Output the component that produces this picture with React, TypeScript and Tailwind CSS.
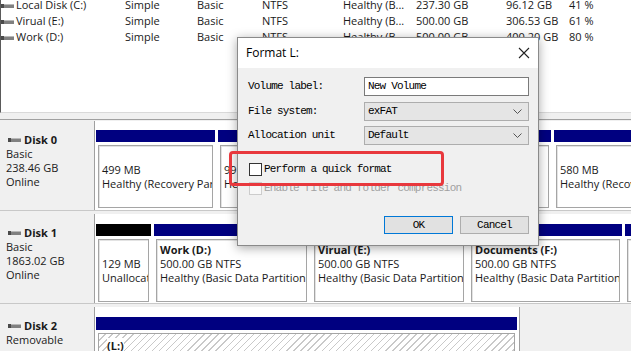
import React from "react";

type Vol = {
  name: string;
  cap: string;
  free: string;
  pct: string;
};

const vols: Vol[] = [
  { name: "Local Disk (C:)", cap: "237.30 GB", free: "96.12 GB", pct: "41 %" },
  { name: "Virual (E:)", cap: "500.00 GB", free: "306.53 GB", pct: "61 %" },
  { name: "Work (D:)", cap: "500.00 GB", free: "400.20 GB", pct: "80 %" },
];

const DriveIcon = () => (
  <svg width="13" height="6" viewBox="0 0 13 6">
    <rect x="0" y="1" width="13" height="4" fill="#808080" />
    <rect x="0" y="1" width="13" height="1" fill="#b8b8b8" />
    <rect x="0" y="1" width="3" height="4" fill="#4a4a4a" />
  </svg>
);

type Part = {
  w: string;
  bar: string;
  lines: string[];
  title?: string;
  top?: boolean;
};

const PartBox = ({ p }: { p: Part }) => (
  <div className={`${p.w} shrink-0 flex flex-col`}>
    <div className={`h-[12px] ${p.bar}`} />
    <div
      className={`mx-[2px] mt-[3px] h-[63px] bg-white border border-[#a5a5a5] shadow-[inset_1px_1px_0_#e3e3e3] pl-[3px] flex flex-col overflow-hidden whitespace-nowrap leading-[14px] ${
        p.top ? "pt-[3px]" : "justify-center"
      }`}
    >
      {p.title && <div className="font-bold">{p.title}</div>}
      {p.lines.map((l, i) => (
        <div key={i}>{l}</div>
      ))}
    </div>
  </div>
);

const DiskLabel = ({ n, lines }: { n: string; lines: string[] }) => (
  <div className="w-[95px] shrink-0 bg-[#f0f0f0] border-r border-[#a0a0a0] pt-[12px] pl-[6px] leading-[14px]">
    <div className="flex items-center gap-[3px] pl-[2px] font-bold">
      <DriveIcon />
      <span>{n}</span>
    </div>
    {lines.map((l) => (
      <div key={l}>{l}</div>
    ))}
  </div>
);

const Chevron = () => (
  <svg width="9" height="5" viewBox="0 0 9 5" className="mr-[6px]">
    <path d="M0.5 0.5 L4.5 4.5 L8.5 0.5" stroke="#555" fill="none" strokeWidth="1" />
  </svg>
);

export default function App() {
  const disk0: Part[] = [
    { w: "w-[119px]", bar: "bg-[#000080]", lines: ["499 MB", "Healthy (Recovery Partition)"] },
    { w: "w-[71px]", bar: "bg-[#000080]", lines: ["99 MB", "Healthy (EFI System)"] },
    {
      w: "w-[259px]",
      bar: "bg-[#000080]",
      lines: ["237.30 GB NTFS", "Healthy (Boot, Page File, Crash D"],
    },
    { w: "w-[100px]", bar: "bg-[#000080]", lines: ["580 MB", "Healthy (Recovery Partition)"] },
  ];
  const disk1: Part[] = [
    { w: "w-[55px]", bar: "bg-black", lines: ["129 MB", "Unallocated"] },
    {
      w: "w-[155px]",
      bar: "bg-[#000080]",
      title: "Work  (D:)",
      top: true,
      lines: ["500.00 GB NTFS", "Healthy (Basic Data Partition)"],
    },
    {
      w: "w-[154px]",
      bar: "bg-[#000080]",
      title: "Virual  (E:)",
      top: true,
      lines: ["500.00 GB NTFS", "Healthy (Basic Data Partition)"],
    },
    {
      w: "w-[153px]",
      bar: "bg-[#000080]",
      title: "Documents  (F:)",
      top: true,
      lines: ["500.00 GB NTFS", "Healthy (Basic Data Partition)"],
    },
    { w: "w-[60px]", bar: "bg-[#000080]", lines: ["", ""] },
  ];

  return (
    <div className="relative w-[631px] h-[351px] overflow-hidden bg-[#f0f0f0] text-[11px] text-[#1a1a1a] font-['Open_Sans',sans-serif]">
      {/* volume list */}
      <div className="h-[113px] bg-white border-l border-[#5a5a5a] border-b border-b-[#d9d9d9] overflow-hidden">
        <div className="-mt-[3px]">
          {vols.map((v) => (
            <div
              key={v.name}
              className="h-[16px] grid grid-cols-[15px_109px_72px_65px_81px_73px_90px_63px_1fr] items-center whitespace-nowrap"
            >
              <div className="pt-[1px]">
                <DriveIcon />
              </div>
              <div>{v.name}</div>
              <div>Simple</div>
              <div>Basic</div>
              <div>NTFS</div>
              <div>Healthy (B...</div>
              <div>{v.cap}</div>
              <div>{v.free}</div>
              <div>{v.pct}</div>
            </div>
          ))}
        </div>
      </div>

      {/* splitter */}
      <div className="h-[7px] border-b border-[#a0a0a0]" />

      {/* graphical view */}
      <div className="pt-[1px] flex flex-col gap-[3px]">
        <div className="h-[90px] flex border-b border-[#c8c8c8]">
          <DiskLabel n="Disk 0" lines={["Basic", "238.46 GB", "Online"]} />
          <div className="flex-1 bg-white pt-[9px] pl-[1px] flex gap-[3px] overflow-hidden">
            {disk0.map((p, i) => (
              <PartBox key={i} p={p} />
            ))}
          </div>
        </div>

        <div className="h-[90px] flex border-b border-[#c8c8c8]">
          <DiskLabel n="Disk 1" lines={["Basic", "1863.02 GB", "Online"]} />
          <div className="flex-1 bg-white pt-[10px] pl-[1px] flex gap-[3px] overflow-hidden">
            {disk1.map((p, i) => (
              <PartBox key={i} p={p} />
            ))}
          </div>
        </div>

        <div className="h-[90px] flex">
          <DiskLabel n="Disk 2" lines={["Removable", ""]} />
          <div className="w-[425px] bg-white border-r border-[#a0a0a0] pt-[10px] pl-[1px] pr-[2px]">
            <div className="h-[13px] bg-[#000080]" />
            <div className="mx-[2px] mt-[3px] h-[60px] border border-[#a5a5a5] pl-[8px] pt-[4px] font-bold bg-[repeating-linear-gradient(135deg,#ffffff_0px,#ffffff_4px,#c9c9c9_4px,#c9c9c9_5px)]">
              <span className="bg-white">(L:)</span>
            </div>
          </div>
        </div>
      </div>

      {/* format dialog */}
      <div className="absolute left-[237px] top-[37px] w-[302px] h-[209px] border border-[#8a8a8a] bg-[#f0f0f0] shadow-[0_2px_10px_rgba(0,0,0,0.35)] flex flex-col">
        <div className="h-[30px] bg-white flex items-center justify-between pl-[8px] pr-[8px] text-[12px] text-black">
          <span>Format L:</span>
          <svg width="12" height="12" viewBox="0 0 12 12">
            <path d="M1 1 L11 11 M11 1 L1 11" stroke="#222" strokeWidth="1.1" />
          </svg>
        </div>
        <div className="flex-1 flex flex-col pl-[10px] pr-[9px] font-['Liberation_Mono',monospace] text-[11px] tracking-[-0.8px] text-black">
          <div className="mt-[9px] h-[19px] flex items-center">
            <span className="w-[116px]">Volume label:</span>
            <div className="flex-1 h-full bg-white border border-[#7a7a7a] flex items-center pl-[3px]">
              New Volume
            </div>
          </div>
          <div className="mt-[6px] h-[19px] flex items-center">
            <span className="w-[116px]">File system:</span>
            <div className="flex-1 h-full bg-[#e5e5e5] border border-[#adadad] flex items-center justify-between pl-[3px]">
              <span>exFAT</span>
              <Chevron />
            </div>
          </div>
          <div className="mt-[5px] h-[19px] flex items-center">
            <span className="w-[116px]">Allocation unit</span>
            <div className="flex-1 h-full bg-[#e5e5e5] border border-[#adadad] flex items-center justify-between pl-[3px]">
              <span>Default</span>
              <Chevron />
            </div>
          </div>
          <div className="mt-[18px] h-[13px] flex items-center gap-[2px] pl-[1px]">
            <div className="w-[13px] h-[13px] bg-white border border-[#333]" />
            <span>Perform a quick format</span>
          </div>
          <div className="mt-[6px] h-[13px] flex items-center gap-[2px] pl-[1px] text-[#a0a0a0]">
            <div className="w-[13px] h-[13px] bg-[#f8f8f8] border border-[#cccccc]" />
            <span>Enable file and folder compression</span>
          </div>
          <div className="mt-[21px] flex justify-end gap-[7px]">
            <div className="w-[69px] h-[18px] bg-[#e1e1e1] border border-[#0078d7] flex items-center justify-center">
              OK
            </div>
            <div className="w-[69px] h-[18px] bg-[#e1e1e1] border border-[#adadad] flex items-center justify-center">
              Cancel
            </div>
          </div>
        </div>
      </div>

      {/* highlight */}
      <div className="absolute left-[229px] top-[151px] w-[215px] h-[35px] border-[3px] border-[#e8383d] rounded-[4px]" />
    </div>
  );
}
